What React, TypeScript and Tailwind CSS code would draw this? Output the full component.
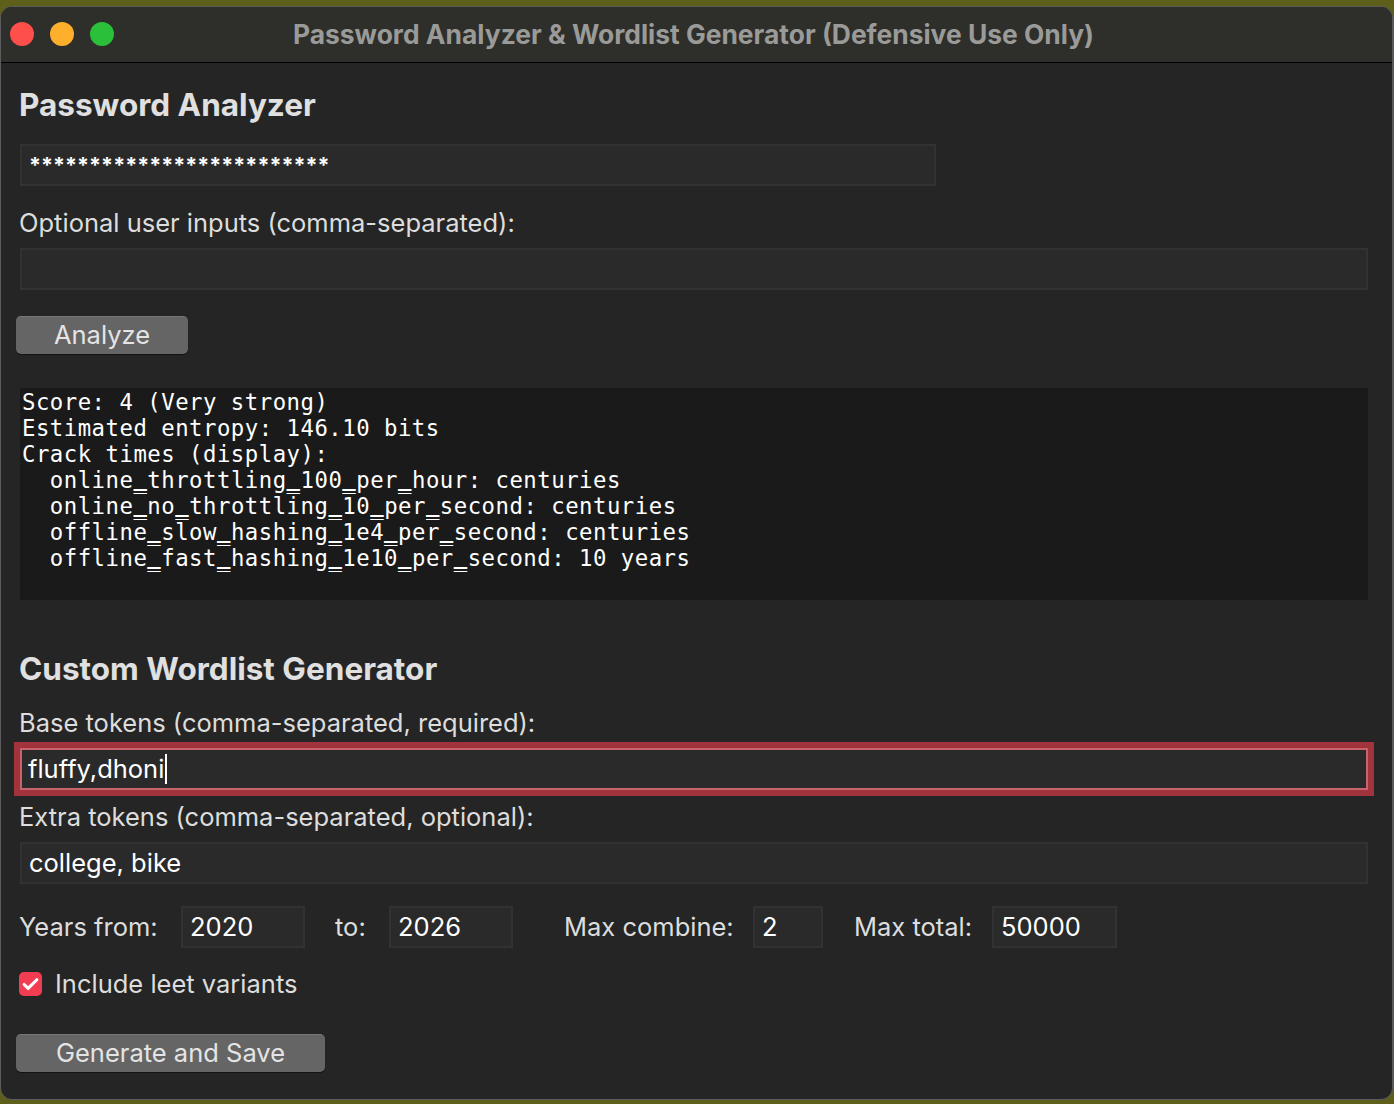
import { Check } from "lucide-react";

const UI = { fontFamily: "Inter, 'Noto Sans', sans-serif" };
const MONO = { fontFamily: "'DejaVu Sans Mono', 'Liberation Mono', monospace" };

const OUTPUT = [
  "Score: 4 (Very strong)",
  "Estimated entropy: 146.10 bits",
  "Crack times (display):",
  "  online_throttling_100_per_hour: centuries",
  "  online_no_throttling_10_per_second: centuries",
  "  offline_slow_hashing_1e4_per_second: centuries",
  "  offline_fast_hashing_1e10_per_second: 10 years",
];

function MonoLine({ text }: { text: string }) {
  const parts = text.split("_");
  return (
    <div className="h-[26px] whitespace-pre">
      {parts.map((p, i) => (
        <span key={i}>
          {p}
          {i < parts.length - 1 && <span className="[text-shadow:0_-3px_0_#fff,0_-4px_0_#fff]">_</span>}
        </span>
      ))}
    </div>
  );
}

function Field({ value, className = "" }: { value?: string; className?: string }) {
  return (
    <div className={`flex h-[42px] items-center border-2 border-[#323232] bg-[#2a2a2a] px-[7px] text-white ${className}`}>
      {value}
    </div>
  );
}

function Btn({ label, w }: { label: string; w: string }) {
  return (
    <button className={`-ml-1 flex h-[38px] ${w} items-center justify-center rounded-[5px] border-t border-[#777] bg-[#656565] text-[25.5px] text-[#e4e4e4] shadow-[0_1px_1px_rgba(0,0,0,0.5)]`}>
      {label}
    </button>
  );
}

export default function App() {
  return (
    <div className="h-[1104px] w-[1394px] overflow-hidden bg-[#5f5f1c] pt-[6px]" style={UI}>
      <div className="flex h-[1094px] w-[1393px] flex-col overflow-hidden rounded-[12px] border border-[#5c5c5c] bg-[#252525]">
        <div className="relative flex h-[56px] shrink-0 items-center justify-center border-b border-black bg-[#2e2e2a]">
          <div className="absolute left-[9px] top-[15px] flex gap-4">
            <span className="h-6 w-6 rounded-full bg-[#fe4f4a]" />
            <span className="h-6 w-6 rounded-full bg-[#feb02d]" />
            <span className="h-6 w-6 rounded-full bg-[#2bc03a]" />
          </div>
          <span className="-ml-[6px] text-[26.4px] font-bold text-[#9a9a98]">Password Analyzer &amp; Wordlist Generator (Defensive Use Only)</span>
        </div>

        <div className="flex flex-col px-[19px] pt-[24px] text-[25.5px] text-[#dddddd]">
          <h1 className="-ml-px text-[31.5px] font-bold leading-[36px] text-[#e0e0e0]">Password Analyzer</h1>
          <Field value="*************************" className="mt-[21px] w-[916px] text-[21.5px] font-bold" />
          <div className="mt-[22px] -ml-px leading-[30px]">Optional user inputs (comma-separated):</div>
          <Field className="mt-[10px] w-[1348px]" />
          <div className="mt-[26px]">
            <Btn label="Analyze" w="w-[172px]" />
          </div>
          <div className="mt-[34px] h-[212px] w-[1348px] bg-[#1a1a1a] pl-[2px] pt-[1px] text-[22.3px] leading-[26px] tracking-[0.5px] text-white" style={MONO}>
            {OUTPUT.map((l) => (
              <MonoLine key={l} text={l} />
            ))}
          </div>

          <h2 className="mt-[51px] -ml-px text-[31.5px] font-bold leading-[36px] text-[#e0e0e0]">Custom Wordlist Generator</h2>
          <div className="mt-[21px] -ml-px leading-[30px]">Base tokens (comma-separated, required):</div>
          <div className="mt-[10px] flex h-[42px] w-[1348px] items-center border-2 border-[#c6636b] bg-[#2a2a2a] px-[6px] text-white ring-[6px] ring-[#a2323c]">
            fluffy,dhoni<span className="ml-[1px] h-[30px] w-[2px] bg-white" />
          </div>
          <div className="mt-[12px] -ml-px leading-[30px]">Extra tokens (comma-separated, optional):</div>
          <Field value="college, bike" className="mt-[10px] w-[1348px]" />

          <div className="mt-[22px] flex h-[42px] items-center">
            <span className="-ml-px w-[162px]">Years from:</span>
            <Field value="2020" className="w-[124px]" />
            <span className="ml-[30px] w-[54px]">to:</span>
            <Field value="2026" className="w-[124px]" />
            <span className="ml-[51px] w-[189px]">Max combine:</span>
            <Field value="2" className="w-[70px]" />
            <span className="ml-[31px] w-[138px]">Max total:</span>
            <Field value="50000" className="w-[125px]" />
          </div>

          <div className="mt-[21px] flex h-[30px] items-center">
            <span className="-ml-[1px] flex h-[24px] w-[23px] items-center justify-center rounded-[5px] bg-[#f23c52]">
              <Check size={19} strokeWidth={4} className="text-white" />
            </span>
            <span className="ml-[13px]">Include leet variants</span>
          </div>

          <div className="mt-[35px]">
            <Btn label="Generate and Save" w="w-[309px]" />
          </div>
        </div>
      </div>
    </div>
  );
}
